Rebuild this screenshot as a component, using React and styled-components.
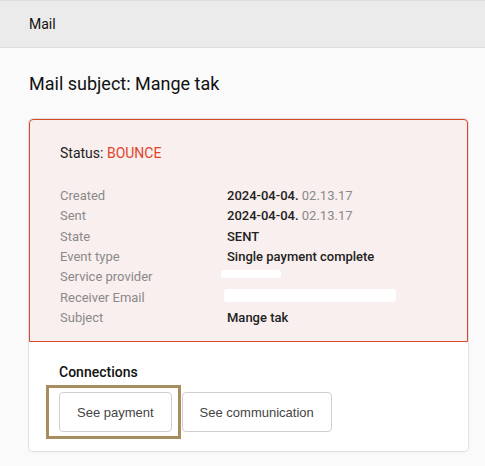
import React from "react";
import styled, { createGlobalStyle } from "styled-components";

const GlobalStyle = createGlobalStyle`
  body {
    margin: 0;
    background: #fafafa;
    font-family: Roboto, "Liberation Sans", sans-serif;
    color: #222;
  }
`;

const details = [
  { label: "Created", value: "2024-04-04.", time: "02.13.17" },
  { label: "Sent", value: "2024-04-04.", time: "02.13.17" },
  { label: "State", value: "SENT" },
  { label: "Event type", value: "Single payment complete" },
  { label: "Service provider", hidden: { width: 60, height: 8, top: 3, left: -6 } },
  { label: "Receiver Email", hidden: { width: 172, height: 13, top: 1, left: -3 } },
  { label: "Subject", value: "Mange tak" },
];

const App = () => {
  return (
    <>
      <GlobalStyle />
      <TopBar>Mail</TopBar>
      <Content>
        <Title>Mail subject: Mange tak</Title>
        <Card>
          <StatusPanel>
            <Status>
              Status: <Bounce>BOUNCE</Bounce>
            </Status>
            <DetailList>
              {details.map((row) => (
                <DetailRow key={row.label}>
                  <Label>{row.label}</Label>
                  <Value>
                    {row.value}
                    {row.time && <Time> {row.time}</Time>}
                    {row.hidden && (
                      <Redacted
                        style={{
                          width: row.hidden.width,
                          height: row.hidden.height,
                          marginTop: row.hidden.top,
                          marginLeft: row.hidden.left,
                        }}
                      />
                    )}
                  </Value>
                </DetailRow>
              ))}
            </DetailList>
          </StatusPanel>
          <Connections>
            <SectionTitle>Connections</SectionTitle>
            <ButtonRow>
              <Focused>
                <LinkButton>See payment</LinkButton>
              </Focused>
              <LinkButton>See communication</LinkButton>
            </ButtonRow>
          </Connections>
        </Card>
      </Content>
    </>
  );
};

export default App;

const TopBar = styled.header`
  height: 46px;
  display: flex;
  align-items: center;
  padding: 0 29px;
  background: #ebebeb;
  border-top: 1px solid #dedede;
  border-bottom: 1px solid #dcdcdc;
  font-size: 14px;
  color: #111;
`;

const Content = styled.main`
  padding: 24px 18px 14px 29px;
`;

const Title = styled.h1`
  margin: 0 0 23px;
  font-size: 18px;
  font-weight: 400;
  line-height: 24px;
  color: #111;
`;

const Card = styled.section`
  width: 439px;
  background: #fff;
  border-radius: 4px;
  box-shadow: 0 0 0 1px #e2e2e2, 0 1px 2px rgba(0, 0, 0, 0.08);
`;

const StatusPanel = styled.div`
  background: #f9efee;
  border: 1px solid #d9472b;
  border-radius: 4px 4px 0 0;
  padding: 23px 30px 13px;
`;

const Status = styled.div`
  font-size: 14px;
  line-height: 20px;
  color: #222;
  margin-bottom: 23px;
`;

const Bounce = styled.span`
  color: #e2432a;
`;

const DetailList = styled.div`
  display: flex;
  flex-direction: column;
`;

const DetailRow = styled.div`
  display: grid;
  grid-template-columns: 167px 1fr;
  font-size: 13px;
  line-height: 20.33px;
`;

const Label = styled.span`
  color: #8a8a8a;
`;

const Value = styled.span`
  display: flex;
  color: #222;
  font-weight: 500;
  white-space: pre;
`;

const Time = styled.span`
  color: #8a8a8a;
  font-weight: 400;
`;

const Redacted = styled.span`
  display: block;
  background: #fff;
  border-radius: 3px;
`;

const Connections = styled.div`
  padding: 20px 30px 19px;
`;

const SectionTitle = styled.h2`
  margin: 0 0 10px;
  font-size: 14px;
  font-weight: 500;
  line-height: 20px;
  color: #111;
`;

const ButtonRow = styled.div`
  display: flex;
  gap: 10px;
`;

const Focused = styled.div`
  position: relative;

  &::after {
    content: "";
    position: absolute;
    left: -13px;
    top: -7px;
    right: -9px;
    bottom: -7px;
    border: 3px solid #a88e5e;
    pointer-events: none;
  }
`;

const LinkButton = styled.button`
  height: 40px;
  padding: 0 17px;
  background: #fff;
  border: 1px solid #cfcfcf;
  border-radius: 4px;
  font-family: "Liberation Sans", Arial, sans-serif;
  font-size: 13px;
  color: #444;
  cursor: pointer;
`;
